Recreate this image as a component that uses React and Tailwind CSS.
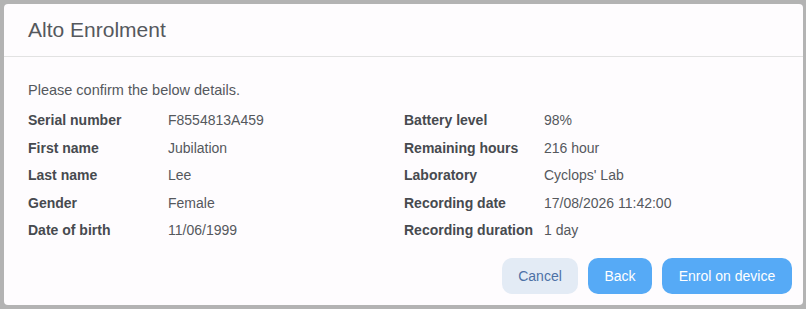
const left = [
  ["Serial number", "F8554813A459"],
  ["First name", "Jubilation"],
  ["Last name", "Lee"],
  ["Gender", "Female"],
  ["Date of birth", "11/06/1999"],
];

const right = [
  ["Battery level", "98%"],
  ["Remaining hours", "216 hour"],
  ["Laboratory", "Cyclops' Lab"],
  ["Recording date", "17/08/2026 11:42:00"],
  ["Recording duration", "1 day"],
];

function DetailColumn({ rows }) {
  return (
    <div className="flex flex-col">
      {rows.map(([label, value]) => (
        <div key={label} className="flex h-[27.5px] items-center">
          <span className="w-[140px] font-bold text-[#474a4f]">{label}</span>
          <span className="text-[#55585d]">{value}</span>
        </div>
      ))}
    </div>
  );
}

export default function App() {
  return (
    <div
      className="h-[309px] w-[806px] bg-[#b3b3b3] pl-[4px] pt-[4px]"
      style={{ fontFamily: '"Liberation Sans", Arial, sans-serif' }}
    >
      <div className="flex h-[301px] w-[799px] flex-col rounded-[4px] bg-[#fefcfe]">
        <div className="flex h-[53px] items-center border-b border-[#e2e2e2] px-[24px]">
          <h1 className="text-[21px] text-[#55585d]">Alto Enrolment</h1>
        </div>
        <div className="px-[24px] pt-[23px] text-[14px]">
          <p className="text-[14.5px] text-[#55585d]">Please confirm the below details.</p>
          <div className="mt-[5px] grid grid-cols-[376px_1fr]">
            <DetailColumn rows={left} />
            <DetailColumn rows={right} />
          </div>
        </div>
        <div className="mt-auto mb-[11px] flex justify-end gap-[10px] pr-[11px] text-[14px]">
          <button className="h-[36px] w-[76px] rounded-[10px] bg-[#e3ebf5] text-[#4d71a6]">
            Cancel
          </button>
          <button className="h-[36px] w-[64px] rounded-[10px] bg-[#56aaf6] text-white">
            Back
          </button>
          <button className="h-[36px] w-[130px] rounded-[10px] bg-[#56aaf6] text-white">
            Enrol on device
          </button>
        </div>
      </div>
    </div>
  );
}
